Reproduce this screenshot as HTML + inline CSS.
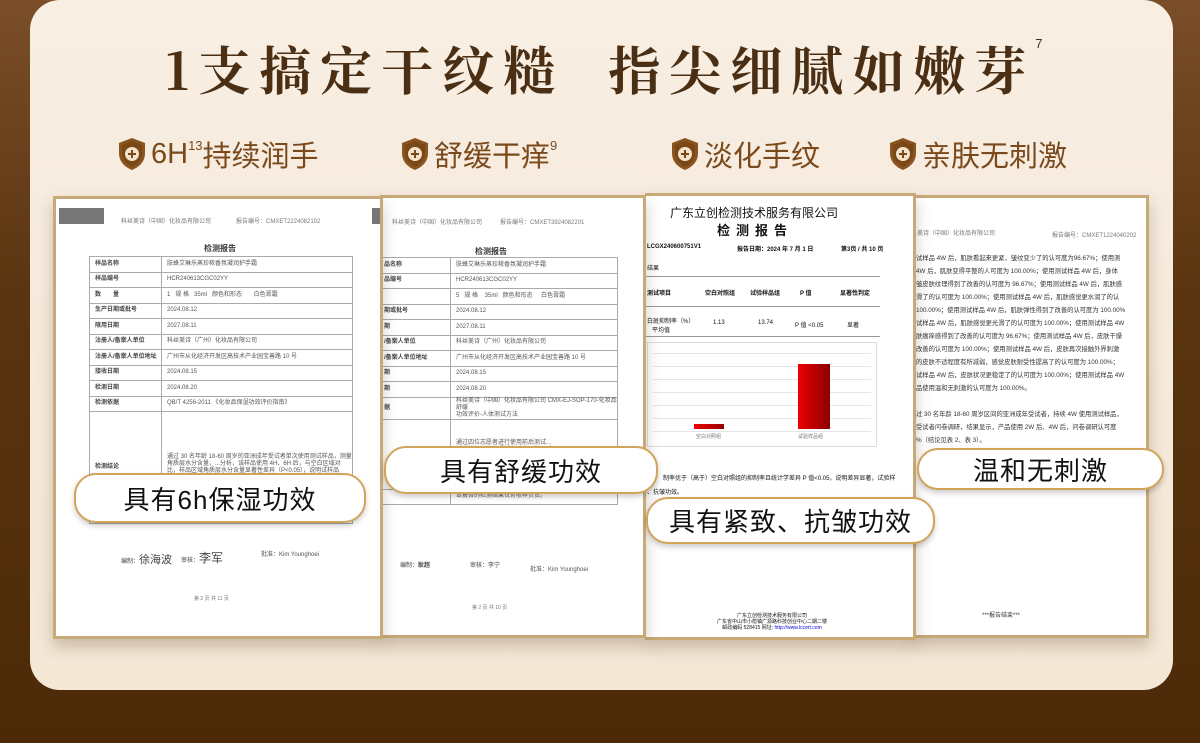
<!DOCTYPE html>
<html><head><meta charset="utf-8"><style>
*{margin:0;padding:0;box-sizing:border-box}
body{width:1200px;height:743px;overflow:hidden;background:linear-gradient(180deg,#7a4e28 0%,#5a3410 40%,#4c2a08 100%);font-family:"Liberation Sans","Noto Sans CJK SC",sans-serif;position:relative}
.card{position:absolute;left:30px;top:0;width:1143px;height:690px;border-radius:30px;background:linear-gradient(180deg,#f8eee2 0%,#f5e9db 60%,#f4e7d6 100%)}
.title{position:absolute;left:165px;top:30px;font-family:"Noto Serif CJK SC","Liberation Serif",serif;font-weight:700;font-size:52px;color:#4a2f14;letter-spacing:9px;white-space:nowrap}
.title sup{font-size:13px;vertical-align:top;position:relative;top:6px;font-family:"Liberation Sans",sans-serif;font-weight:400;letter-spacing:0}
.feat{position:absolute;top:133px;font-size:29px;color:#7a4a1c;display:flex;align-items:center;white-space:nowrap}
.feat svg{width:30px;height:34px;margin-right:4px}
.feat .s{font-size:13px;display:inline-block;position:relative;top:-9px}
.doc{position:absolute;background:#fff;border:3px solid #c7aa78;box-shadow:0 8px 14px rgba(80,50,20,.25)}
.small{position:absolute;font-size:6px;color:#777;white-space:nowrap}
table{border-collapse:collapse;position:absolute}
td{border:1px solid #aaa;font-size:6px;color:#555;height:15.5px;line-height:7px;padding:0 0 0 5px}
td.h{font-weight:bold;color:#444;width:72px}
.lbl{position:absolute;background:#fff;border:2px solid #d1a45c;border-radius:22px;font-size:26px;color:#111;display:flex;align-items:center;justify-content:center;box-shadow:0 3px 6px rgba(0,0,0,.2);white-space:nowrap;letter-spacing:1px}
.tx div{font-size:6.3px;color:#333;white-space:nowrap;height:13px}
</style></head><body>
<div class="card"></div>
<div class="title">1支搞定干纹糙&nbsp;&nbsp;指尖细腻如嫩芽<sup>7</sup></div>

<div class="feat" style="left:117px"><svg viewBox="0 0 30 34"><path d="M15 1 L28 6 V16 C28 25 22 30 15 33 C8 30 2 25 2 16 V6 Z" fill="#8a5420"/><path d="M15 4 L25 8 V16 C25 23 20 27 15 30 C10 27 5 23 5 16 V8Z" fill="#7a4716"/><circle cx="15" cy="17" r="7" fill="#f4e3cc"/><path d="M15 13v8M11 17h8" stroke="#7a4716" stroke-width="2"/></svg>6H<span class="s">13</span>持续润手</div>
<div class="feat" style="left:400px"><svg viewBox="0 0 30 34"><path d="M15 1 L28 6 V16 C28 25 22 30 15 33 C8 30 2 25 2 16 V6 Z" fill="#8a5420"/><path d="M15 4 L25 8 V16 C25 23 20 27 15 30 C10 27 5 23 5 16 V8Z" fill="#7a4716"/><circle cx="15" cy="17" r="7" fill="#f4e3cc"/><path d="M15 13v8M11 17h8" stroke="#7a4716" stroke-width="2"/></svg>舒缓干痒<span class="s">9</span></div>
<div class="feat" style="left:670px"><svg viewBox="0 0 30 34"><path d="M15 1 L28 6 V16 C28 25 22 30 15 33 C8 30 2 25 2 16 V6 Z" fill="#8a5420"/><path d="M15 4 L25 8 V16 C25 23 20 27 15 30 C10 27 5 23 5 16 V8Z" fill="#7a4716"/><circle cx="15" cy="17" r="7" fill="#f4e3cc"/><path d="M15 13v8M11 17h8" stroke="#7a4716" stroke-width="2"/></svg>淡化手纹</div>
<div class="feat" style="left:888px"><svg viewBox="0 0 30 34"><path d="M15 1 L28 6 V16 C28 25 22 30 15 33 C8 30 2 25 2 16 V6 Z" fill="#8a5420"/><path d="M15 4 L25 8 V16 C25 23 20 27 15 30 C10 27 5 23 5 16 V8Z" fill="#7a4716"/><circle cx="15" cy="17" r="7" fill="#f4e3cc"/><path d="M15 13v8M11 17h8" stroke="#7a4716" stroke-width="2"/></svg>亲肤无刺激</div>

<!-- doc 4 -->
<div class="doc" style="left:912px;top:195px;width:237px;height:443px;border-left:none">
<div class="small" style="left:5px;top:30px">美诗（中国）化妆品有限公司</div>
<div class="small" style="left:140px;top:32px">报告编号：CMXET1224040202</div>
<div class="tx" style="position:absolute;left:4px;top:55px">
<div>试样品 4W 后，肌肤看起来更紧，皱纹变少了的认可度为96.67%；使用测</div>
<div>4W 后，肌肤变得平整的人可度为 100.00%；使用测试样品 4W 后，身体</div>
<div>皱皮肤纹理得到了改善的认可度为 96.67%；使用测试样品 4W 后，肌肤感</div>
<div>滑了的认可度为 100.00%；使用测试样品 4W 后，肌肤感觉更水润了的认</div>
<div>100.00%；使用测试样品 4W 后，肌肤弹性得到了改善的认可度为 100.00%</div>
<div>试样品 4W 后，肌肤感觉更光滑了的认可度为 100.00%；使用测试样品 4W</div>
<div>肤瘙痒感得到了改善的认可度为 96.67%；使用测试样品 4W 后，皮肤干燥</div>
<div>改善的认可度为 100.00%；使用测试样品 4W 后，皮肤再次接触外界刺激</div>
<div>的皮肤不适程度有所减弱，感觉皮肤耐受性提高了的认可度为 100.00%；</div>
<div>试样品 4W 后，皮肤状况更稳定了的认可度为 100.00%；使用测试样品 4W</div>
<div>品使用温和无刺激的认可度为 100.00%。</div>
<div>&nbsp;</div>
<div>过 30 名年龄 18-60 周岁区间的亚洲成年受试者，持续 4W 使用测试样品，</div>
<div>受试者问卷调研，结果显示，产品使用 2W 后、4W 后，问卷调研认可度</div>
<div>%（结论见表 2、表 3）。</div>
</div>
<div class="small" style="left:70px;top:412px;color:#333">***报告结束***</div>
</div>

<!-- doc 3 -->
<div class="doc" style="left:645px;top:193px;width:271px;height:447px;border-left:none">
<div style="position:absolute;left:25px;top:8px;font-size:12px;color:#111;font-family:'Noto Sans CJK SC',sans-serif">广东立创检测技术服务有限公司</div>
<div style="position:absolute;left:72px;top:24px;font-size:13px;font-weight:bold;color:#111;letter-spacing:6px">检测报告</div>
<div class="small" style="left:2px;top:48px;color:#111;font-weight:bold">LCGX240600751V1</div>
<div class="small" style="left:92px;top:48px;color:#111;font-weight:bold">报告日期：2024 年 7 月 1 日</div>
<div class="small" style="left:196px;top:48px;color:#111;font-weight:bold">第3页 / 共 10 页</div>
<div class="small" style="left:2px;top:67px;color:#111">结果</div>
<div style="position:absolute;left:0;top:80px;width:235px;height:1px;background:#999"></div>
<div class="small" style="left:2px;top:92px;color:#111;font-weight:bold">测试项目</div>
<div class="small" style="left:60px;top:92px;color:#111;font-weight:bold">空白对照组</div>
<div class="small" style="left:105px;top:92px;color:#111;font-weight:bold">试验样品组</div>
<div class="small" style="left:155px;top:92px;color:#111;font-weight:bold">P 值</div>
<div class="small" style="left:195px;top:92px;color:#111;font-weight:bold">显著性判定</div>
<div style="position:absolute;left:0;top:110px;width:235px;height:1px;background:#999"></div>
<div class="small" style="left:2px;top:120px;color:#111">白斑抑制率（%）<br>&nbsp;&nbsp;&nbsp;平均值</div>
<div class="small" style="left:68px;top:124px;color:#111">1.13</div>
<div class="small" style="left:113px;top:124px;color:#111">13.74</div>
<div class="small" style="left:150px;top:124px;color:#111">P 值 &lt;0.05</div>
<div class="small" style="left:202px;top:124px;color:#111">显著</div>
<div style="position:absolute;left:0;top:140px;width:235px;height:1px;background:#999"></div>
<div style="position:absolute;left:2px;top:146px;width:230px;height:105px;border:1px solid #ddd">
<div style="position:absolute;left:5px;right:5px;top:10px;height:85px;background:repeating-linear-gradient(180deg,#e6e6e6 0 1px,transparent 1px 13px)"></div>
<div style="position:absolute;left:46px;top:81px;width:30px;height:5px;background:linear-gradient(90deg,#e00,#900)"></div>
<div style="position:absolute;left:150px;top:21px;width:32px;height:65px;background:linear-gradient(90deg,#e00,#800)"></div>
<div class="small" style="left:48px;top:90px;font-size:5px">空白对照组</div>
<div class="small" style="left:150px;top:90px;font-size:5px">试验样品组</div>
</div>
<div class="small" style="left:18px;top:277px;color:#111">制率优于（高于）空白对照组的抑制率且统计学差异 P 值&lt;0.05，说明差异显著，试验样</div>
<div class="small" style="left:2px;top:291px;color:#111">、抗皱功效。</div>
<div class="small" style="left:72px;top:417px;color:#111;font-size:5px;line-height:6px;text-align:center">广东立创检测技术服务有限公司<br>广东省中山市小榄镇广源路科技创业中心二期二楼<br>邮政编码 528415 网址: <span style="color:#00c">http://www.lccert.com</span></div>
</div>

<!-- doc 2 -->
<div class="doc" style="left:380px;top:195px;width:266px;height:443px;border-left:none">
<div class="small" style="left:12px;top:19px">科丝美诗（中国）化妆品有限公司</div>
<div class="small" style="left:120px;top:19px">报告编号：CMXET3924082201</div>
<div class="small" style="left:95px;top:48px;font-size:8px;color:#333;font-weight:bold">检测报告</div>
<table style="left:-2px;top:59px;width:240px">
<tr><td class="h" style="width:55px">品名称</td><td>肤蜂艾琳乐蒸珍秾香氛凝润护手霜</td></tr>
<tr><td class="h">品编号</td><td>HCR240613CGC02YY</td></tr>
<tr><td class="h"></td><td>5&nbsp;&nbsp; 规 格&nbsp;&nbsp;&nbsp; 35ml&nbsp;&nbsp; 颜色和形态&nbsp;&nbsp;&nbsp;&nbsp; 白色膏霜</td></tr>
<tr><td class="h">期或批号</td><td>2024.08.12</td></tr>
<tr><td class="h">期</td><td>2027.08.11</td></tr>
<tr><td class="h">/备案人单位</td><td>科丝美诗（广州）化妆品有限公司</td></tr>
<tr><td class="h">/备案人单位地址</td><td>广州市从化经济开发区高技术产业园宝善路 10 号</td></tr>
<tr><td class="h">期</td><td>2024.08.15</td></tr>
<tr><td class="h">期</td><td>2024.08.20</td></tr>
<tr><td class="h">据</td><td>科丝美诗（中国）化妆品有限公司 CMX-EJ-SOP-170-化妆品舒缓<br>功效评价-人体测试方法</td></tr>
<tr><td class="h" style="height:70px"></td><td>通过四位志愿者进行使用前后测试...<br>刺激状态，统计受试者对产品使用后...<br><br>（检验检测专用章）</td></tr>
<tr><td class="h"></td><td>本报告的检测结果仅对收样负责。</td></tr>
</table>
<div class="small" style="left:20px;top:362px;color:#444">编制：<b>耿超</b></div>
<div class="small" style="left:90px;top:362px;color:#444">审核：李宁</div>
<div class="small" style="left:150px;top:366px;color:#555">批准：Kim Younghoei</div>
<div class="small" style="left:92px;top:406px;font-size:5px">第 2 页 共 10 页</div>
</div>

<!-- doc 1 -->
<div class="doc" style="left:53px;top:196px;width:330px;height:443px">
<div style="position:absolute;left:3px;top:9px;width:45px;height:16px;background:#777"></div>
<div class="small" style="left:65px;top:17px">科丝美诗（中国）化妆品有限公司</div>
<div class="small" style="left:180px;top:17px">报告编号：CMXET2224082102</div>
<div style="position:absolute;left:316px;top:9px;width:8px;height:16px;background:#777"></div>
<div class="small" style="left:148px;top:44px;font-size:8px;color:#333;font-weight:bold">检测报告</div>
<table style="left:33px;top:57px;width:264px">
<tr><td class="h">样品名称</td><td>肤蜂艾琳乐蒸珍秾香氛凝润护手霜</td></tr>
<tr><td class="h">样品编号</td><td>HCR240613CGC02YY</td></tr>
<tr><td class="h">数　　量</td><td>1&nbsp;&nbsp; 规 格&nbsp;&nbsp; 35ml&nbsp;&nbsp; 颜色和形态&nbsp;&nbsp;&nbsp;&nbsp;&nbsp;&nbsp; 白色膏霜</td></tr>
<tr><td class="h">生产日期或批号</td><td>2024.08.12</td></tr>
<tr><td class="h">限用日期</td><td>2027.08.11</td></tr>
<tr><td class="h">注册人/备案人单位</td><td>科丝美诗（广州）化妆品有限公司</td></tr>
<tr><td class="h">注册人/备案人单位地址</td><td>广州市从化经济开发区高技术产业园宝善路 10 号</td></tr>
<tr><td class="h">接收日期</td><td>2024.08.15</td></tr>
<tr><td class="h">检测日期</td><td>2024.08.20</td></tr>
<tr><td class="h">检测依据</td><td>QB/T 4256-2011 《化妆品保湿功效评价指南》</td></tr>
<tr><td class="h" style="height:112px">检测结论</td><td>通过 30 名年龄 18-60 周岁的亚洲成年受试者单次使用测试样品，测量<br>角质层水分含量，...分析，该样品使用 4H、6H 后，与空白区域对<br>比，样品区域角质层水分含量显著性差异（P&lt;0.05），说明试样品<br>具有 6h 保湿效果。</td></tr>
</table>
<div class="small" style="left:65px;top:352px;color:#444">编制：<span style="font-size:11px">徐海波</span></div>
<div class="small" style="left:125px;top:350px;color:#444">审核：<span style="font-size:12px">李军</span></div>
<div class="small" style="left:205px;top:350px;color:#555">批准：Kim Younghoei</div>
<div class="small" style="left:138px;top:396px;font-size:5px">第 2 页 共 11 页</div>
</div>

<div class="lbl" style="left:74px;top:473px;width:292px;height:50px">具有6h保湿功效</div>
<div class="lbl" style="left:384px;top:446px;width:274px;height:48px">具有舒缓功效</div>
<div class="lbl" style="left:646px;top:497px;width:289px;height:47px">具有紧致、抗皱功效</div>
<div class="lbl" style="left:917px;top:448px;width:247px;height:42px">温和无刺激</div>
</body></html>
